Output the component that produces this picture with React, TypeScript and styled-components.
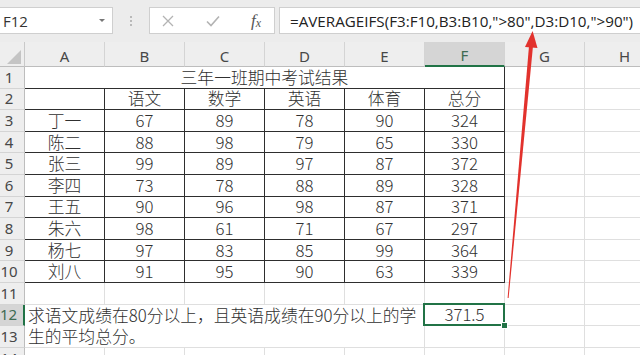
import React from "react";
import styled, { createGlobalStyle, css } from "styled-components";

const GlobalStyle = createGlobalStyle`
  html, body { margin: 0; padding: 0; background: #ffffff; }
  body { overflow: hidden; }
`;

const GREEN = "#217346";
const GRID = "#dfdfdf";
const DARK = "#2e2e2e";
const HEAD_BG = "#eeeeee";

const Page = styled.div`
  position: relative;
  width: 640px;
  height: 355px;
  overflow: hidden;
  background: #ffffff;
  font-family: "Noto Sans CJK SC", "Noto Sans", sans-serif;
`;

const FormulaBar = styled.div`
  display: flex;
  align-items: flex-start;
  height: 42px;
  box-sizing: border-box;
  padding-top: 7px;
  background: #ececec;
  width: 680px;
`;

const Box = styled.div`
  height: 27px;
  box-sizing: border-box;
  background: #ffffff;
  border: 1px solid #cfcfcf;
  display: flex;
  align-items: center;
`;

const NameBox = styled(Box)`
  width: 114px;
  margin-left: -1px;
  padding: 0 7px 0 3px;
  justify-content: space-between;
  font-family: "Open Sans", "Noto Sans", sans-serif;
  font-size: 15px;
  color: #333;
`;

const Caret = styled.span`
  width: 0;
  height: 0;
  border-left: 3px solid transparent;
  border-right: 3px solid transparent;
  border-top: 3px solid #777;
`;

const Dots = styled.div`
  width: 36px;
  height: 27px;
  display: flex;
  flex-direction: column;
  align-items: center;
  justify-content: center;
  gap: 2px;
`;

const Dot = styled.span`
  width: 2px;
  height: 2px;
  border-radius: 1px;
  background: #a8a8a8;
`;

const ButtonsBox = styled(Box)`
  width: 126px;
  padding: 0 13px 0 11px;
  justify-content: space-between;
`;

const Fx = styled.span`
  font-family: "Liberation Serif", "DejaVu Serif", serif;
  font-style: italic;
  font-size: 17px;
  color: #555;
  line-height: 1;
  sub {
    font-size: 12px;
    vertical-align: baseline;
    position: relative;
    top: 1px;
  }
`;

const FormulaInput = styled(Box)`
  flex: 1;
  margin-left: 4px;
  padding-left: 10px;
  font-family: "Open Sans", "Noto Sans", sans-serif;
  font-size: 15.2px;
  color: #222;
  white-space: nowrap;
`;

const Sheet = styled.div`
  display: grid;
  grid-template-columns: 25px repeat(8, 80px);
  grid-template-rows: 25px repeat(14, 21.6px);
  width: 665px;
`;

const Corner = styled.div`
  background: ${HEAD_BG};
  border-right: 1px solid #c9c9c9;
  border-bottom: 1px solid #bdbdbd;
  display: flex;
  align-items: flex-end;
  justify-content: flex-end;
  padding: 0 3px 2px 0;
  box-sizing: border-box;
`;

const CornerTri = styled.span`
  width: 0;
  height: 0;
  border-left: 14px solid transparent;
  border-bottom: 14px solid #c4c4c4;
`;

const ColHead = styled.div<{ $active?: boolean }>`
  box-sizing: border-box;
  display: flex;
  align-items: center;
  justify-content: center;
  padding-top: 4px;
  font-family: "Noto Sans", "Open Sans", sans-serif;
  font-size: 15px;
  line-height: 1;
  color: #474747;
  background: ${HEAD_BG};
  border-right: 1px solid #d4d4d4;
  border-bottom: 1px solid #bdbdbd;
  ${(p) =>
    p.$active &&
    css`
      background: #d5d5d5;
      color: #3f6b52;
      border-bottom: 2px solid ${GREEN};
    `}
`;

const RowHead = styled.div<{ $active?: boolean }>`
  box-sizing: border-box;
  display: flex;
  align-items: center;
  justify-content: center;
  overflow: hidden;
  padding-right: 6px;
  font-family: "Noto Sans", "Open Sans", sans-serif;
  font-size: 15px;
  line-height: 1;
  color: #474747;
  background: ${HEAD_BG};
  border-right: 1px solid #bdbdbd;
  border-bottom: 1px solid #d4d4d4;
  ${(p) =>
    p.$active &&
    css`
      background: #d5d5d5;
      color: #3f6b52;
      border-right: 2px solid ${GREEN};
    `}
`;

const Cell = styled.div<{ $dark?: boolean; $span?: number }>`
  box-sizing: border-box;
  display: flex;
  align-items: center;
  justify-content: center;
  font-size: 16.8px;
  font-weight: 300;
  line-height: 1;
  color: #303030;
  white-space: nowrap;
  border-right: 1px solid ${(p) => (p.$dark ? DARK : GRID)};
  border-bottom: 1px solid ${(p) => (p.$dark ? DARK : GRID)};
  ${(p) => p.$span && css`grid-column: span ${p.$span};`}
`;

const NoteCell = styled.div`
  grid-column: span 5;
  grid-row: span 2;
  box-sizing: border-box;
  display: flex;
  flex-direction: column;
  justify-content: center;
  padding-left: 3px;
  font-size: 16.8px;
  font-weight: 300;
  color: #303030;
  white-space: nowrap;
  border-right: 1px solid ${GRID};
  border-bottom: 1px solid ${GRID};
`;

const NoteLine = styled.div`
  height: 21px;
  line-height: 21px;
`;

const SelectedCell = styled(Cell)`
  position: relative;
  &::after {
    content: "";
    position: absolute;
    left: -2px;
    top: -2px;
    right: -1px;
    bottom: -1px;
    border: 2px solid ${GREEN};
  }
  &::before {
    content: "";
    position: absolute;
    right: -4px;
    bottom: -4px;
    width: 5px;
    height: 5px;
    background: ${GREEN};
    border: 1px solid #fff;
    z-index: 1;
  }
`;

const ArrowLayer = styled.svg`
  position: absolute;
  left: 0;
  top: 0;
  width: 640px;
  height: 355px;
  pointer-events: none;
`;

const cols = ["A", "B", "C", "D", "E", "F", "G", "H"];

const data: string[][] = [
  ["丁一", "67", "89", "78", "90", "324"],
  ["陈二", "88", "98", "79", "65", "330"],
  ["张三", "99", "89", "97", "87", "372"],
  ["李四", "73", "78", "88", "89", "328"],
  ["王五", "90", "96", "98", "87", "371"],
  ["朱六", "98", "61", "71", "67", "297"],
  ["杨七", "97", "83", "85", "99", "364"],
  ["刘八", "91", "95", "90", "63", "339"],
];

const Blank = ({ n }: { n: number }) => (
  <>
    {Array.from({ length: n }).map((_, i) => (
      <Cell key={i} />
    ))}
  </>
);

export default function App() {
  return (
    <>
      <GlobalStyle />
      <Page>
        <FormulaBar>
          <NameBox>
            <span>F12</span>
            <Caret />
          </NameBox>
          <Dots>
            <Dot />
            <Dot />
            <Dot />
          </Dots>
          <ButtonsBox>
            <svg width="14" height="14" viewBox="0 0 14 14">
              <path d="M2 2 L12 12 M12 2 L2 12" stroke="#b3b3b3" strokeWidth="1.3" fill="none" />
            </svg>
            <svg width="16" height="14" viewBox="0 0 16 14">
              <path d="M2 7.5 L6 11.5 L14 2.5" stroke="#b3b3b3" strokeWidth="1.6" fill="none" />
            </svg>
            <Fx>
              f<sub>x</sub>
            </Fx>
          </ButtonsBox>
          <FormulaInput>=AVERAGEIFS(F3:F10,B3:B10,"&gt;80",D3:D10,"&gt;90")</FormulaInput>
        </FormulaBar>

        <Sheet>
          <Corner>
            <CornerTri />
          </Corner>
          {cols.map((c) => (
            <ColHead key={c} $active={c === "F"}>
              {c}
            </ColHead>
          ))}

          <RowHead>1</RowHead>
          <Cell $dark $span={6}>三年一班期中考试结果</Cell>
          <Blank n={2} />

          <RowHead>2</RowHead>
          {["", "语文", "数学", "英语", "体育", "总分"].map((t, i) => (
            <Cell key={i} $dark>
              {t}
            </Cell>
          ))}
          <Blank n={2} />

          {data.map((row, r) => (
            <React.Fragment key={r}>
              <RowHead>{r + 3}</RowHead>
              {row.map((t, i) => (
                <Cell key={i} $dark>
                  {t}
                </Cell>
              ))}
              <Blank n={2} />
            </React.Fragment>
          ))}

          <RowHead>11</RowHead>
          <Blank n={8} />

          <RowHead $active>12</RowHead>
          <NoteCell>
            <NoteLine>求语文成绩在80分以上，且英语成绩在90分以上的学</NoteLine>
            <NoteLine>生的平均总分。</NoteLine>
          </NoteCell>
          <SelectedCell>371.5</SelectedCell>
          <Blank n={2} />

          <RowHead>13</RowHead>
          <Blank n={3} />

          <RowHead>14</RowHead>
          <Blank n={8} />
        </Sheet>

        <ArrowLayer viewBox="0 0 640 355">
          <polygon points="507.6,298 508.6,298 533,46 529,46" fill="#e2322d" />
          <polygon points="525,47 537.5,48 532.6,31" fill="#e2322d" />
        </ArrowLayer>
      </Page>
    </>
  );
}
